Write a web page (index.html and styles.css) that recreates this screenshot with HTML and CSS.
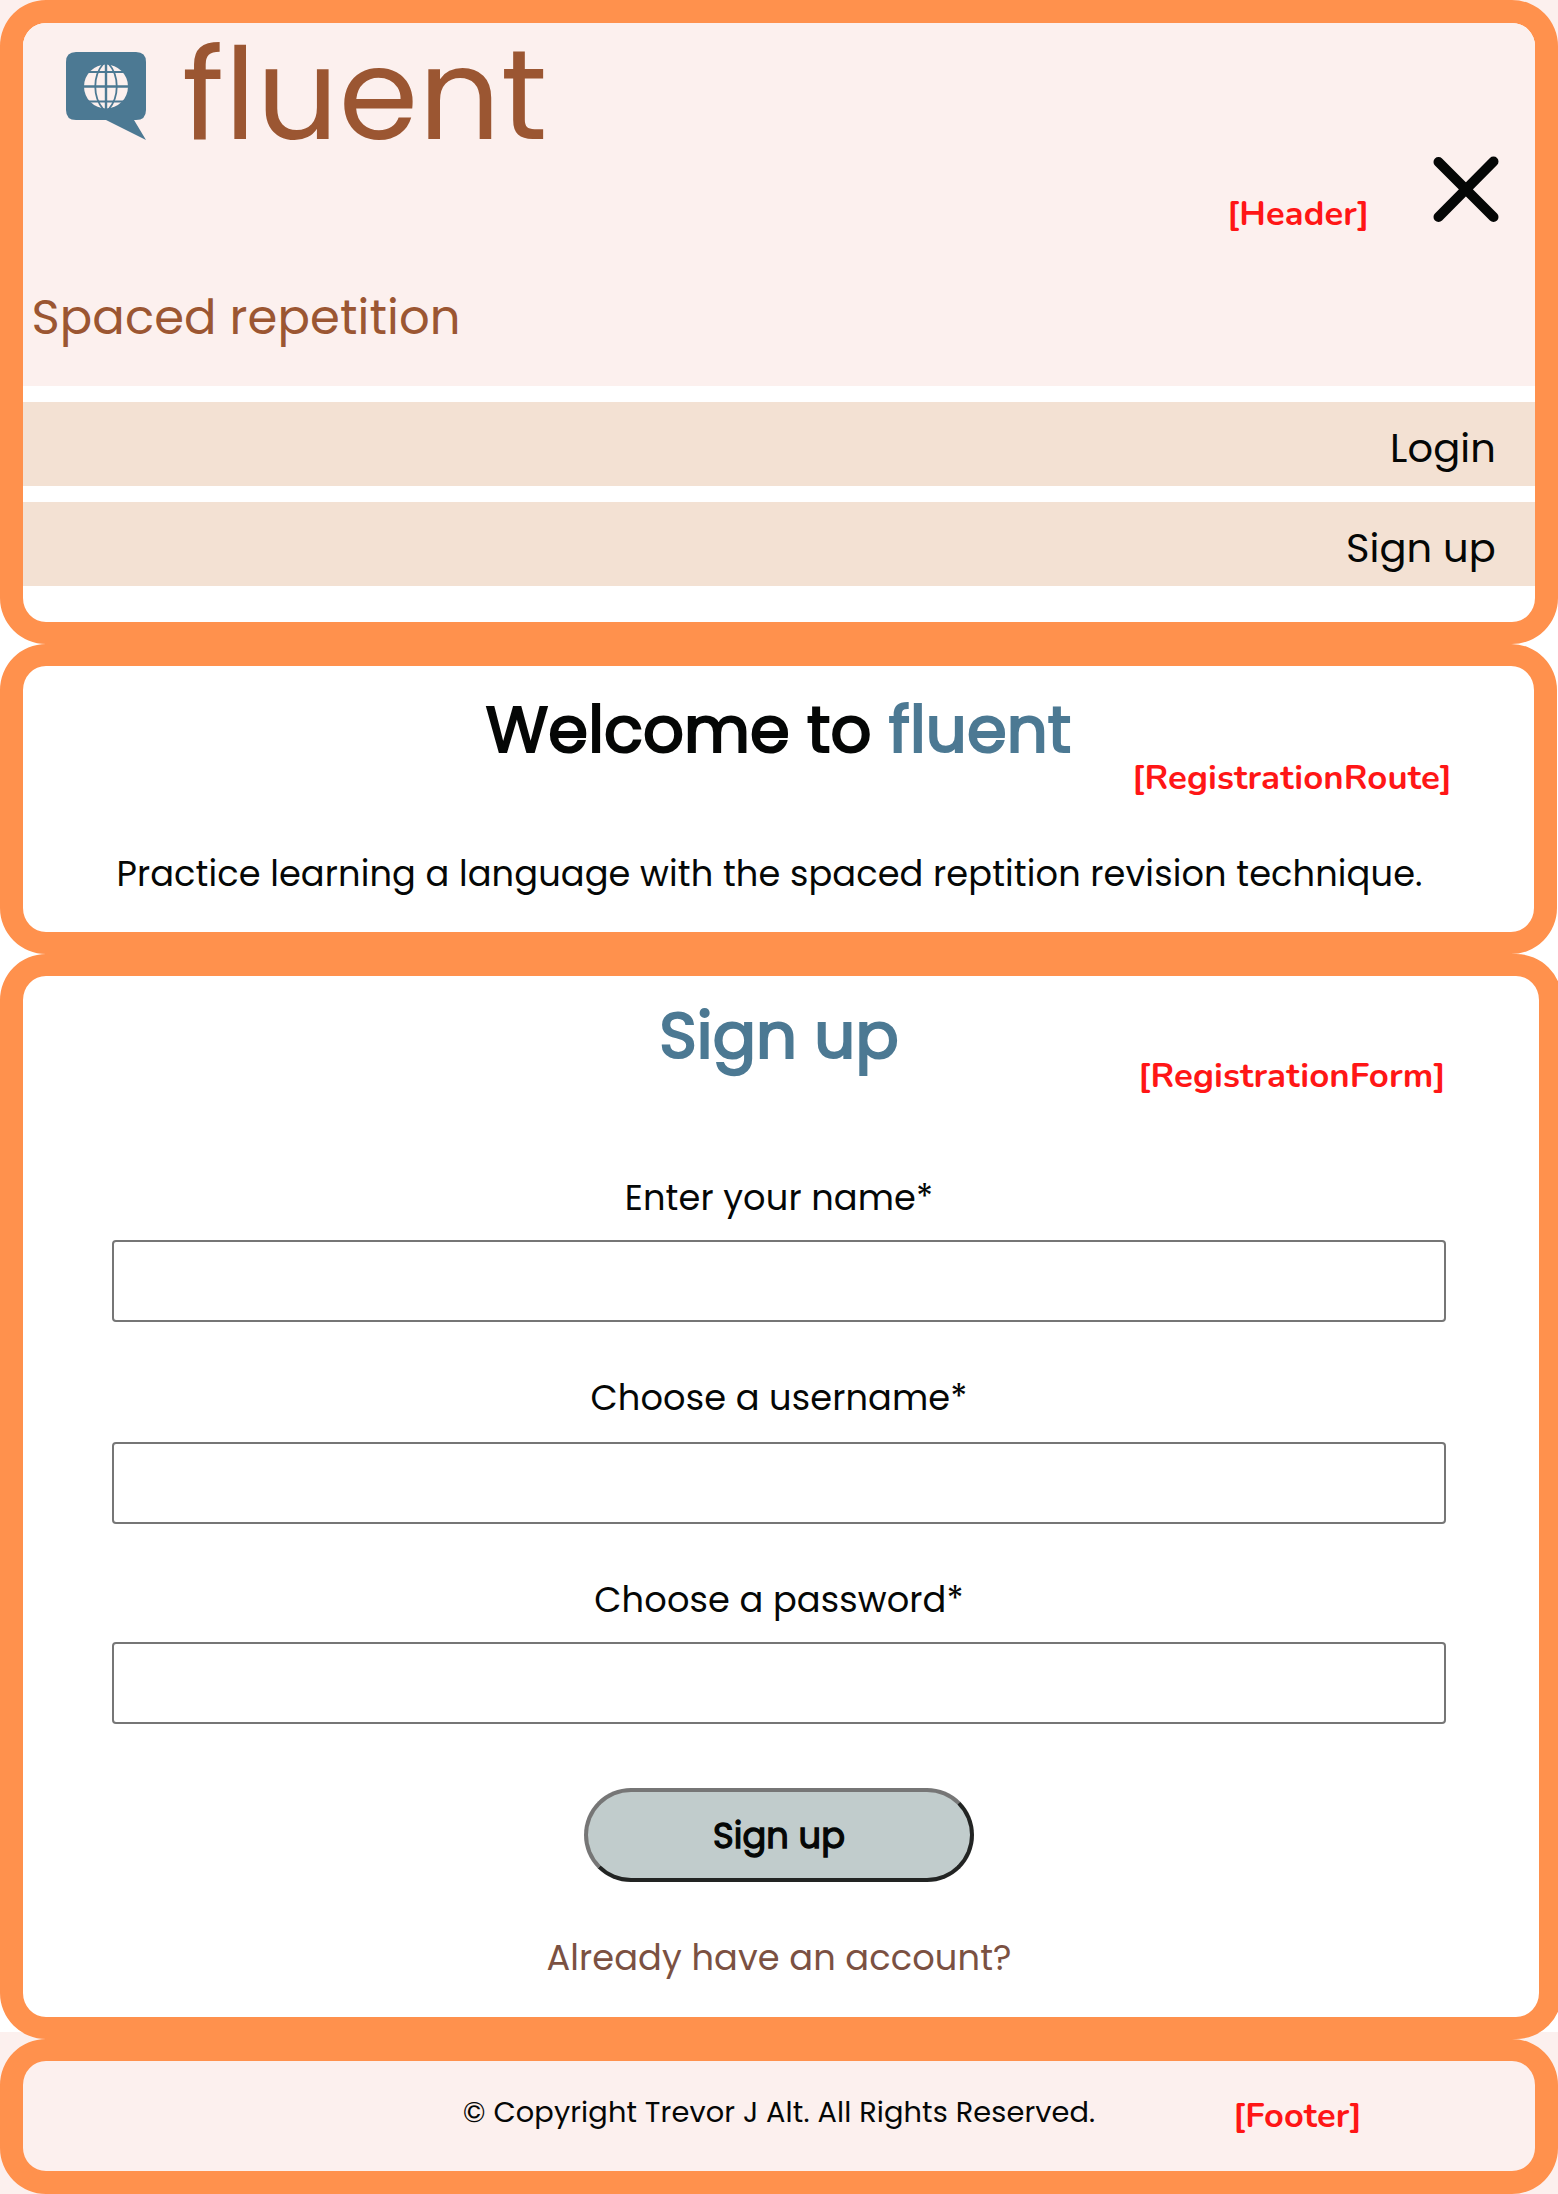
FILE: index.html
```html
<!DOCTYPE html>
<html lang="en">
<head>
<meta charset="utf-8">
<title>fluent</title>
<link rel="stylesheet" href="styles.css">
</head>
<body>
<header class="panel header">
  <div class="banner">
    <div class="branding">
      <div class="brand">
        <svg class="logo" viewBox="0 0 80 88">
          <path fill="#4c7993" d="M10 0H70Q80 0 80 10V58Q80 68 70 68H68L80 88L40 68H10Q0 68 0 58V10Q0 0 10 0Z"/>
          <circle cx="40" cy="34.500" r="22" fill="#fcf0ee"/>
          <g fill="none" stroke="#4c7993" stroke-width="1.800">
            <path stroke-width="2.400" d="M40 11V58M17 34.500H63"/>
            <path d="M20 20H60M20 49.500H60"/>
            <path d="M37.500 11.500C26.500 24 26.500 45 37.500 57.500M42.500 11.500C53.500 24 53.500 45 42.500 57.500"/>
          </g>
        </svg>
        <span class="brand-name">fluent</span>
      </div>
      <p class="tagline">Spaced repetition</p>
    </div>
    <svg class="close" viewBox="0 0 66 67"><path d="M5.500 6L60.500 61M60.500 5.500L5.500 61" stroke="#050706" stroke-width="10" stroke-linecap="round"/></svg>
  </div>
  <nav class="menu">
    <a class="menu-item">Login</a>
    <a class="menu-item">Sign up</a>
  </nav>
  <span class="tag tag-header">[Header]</span>
</header>
<section class="panel welcome">
  <h1 class="title">Welcome to <span class="accent">fluent</span></h1>
  <p class="intro">Practice learning a language with the spaced reptition revision technique.</p>
  <span class="tag tag-route">[RegistrationRoute]</span>
</section>
<section class="panel signup">
  <h2 class="title accent">Sign up</h2>
  <form class="form">
    <div class="field"><label class="label" for="name">Enter your name*</label><input class="input" id="name"></div>
    <div class="field field-username"><label class="label" for="username">Choose a username*</label><input class="input" id="username"></div>
    <div class="field"><label class="label" for="password">Choose a password*</label><input class="input" id="password" type="password"></div>
    <button class="submit" type="button">Sign up</button>
    <a class="account">Already have an account?</a>
  </form>
  <span class="tag tag-form">[RegistrationForm]</span>
</section>
<footer class="panel footer">
  <p class="copyright">© Copyright Trevor J Alt. All Rights Reserved.</p>
  <span class="tag tag-footer">[Footer]</span>
</footer>
</body>
</html>
```
FILE: styles.css
```css
* { box-sizing: border-box; margin: 0; padding: 0; }
html { overflow: hidden; }
body {
  width: 1558px;
  overflow: hidden;
  font-family: Poppins, Inter, sans-serif;
  font-size: 35.2px;
  line-height: 40px;
  letter-spacing: 0.12px;
  color: #050706;
  background: linear-gradient(#fcf0ee 0 386px, #fff 386px 2032px, #fcf0ee 2032px);
}
.panel {
  position: relative;
  border: solid #ff914d;
  border-width: 22px 23px;
  border-radius: 46px;
  background: #fff;
}
.header { height: 644px; border-top-width: 23px; }
.banner {
  display: flex;
  justify-content: space-between;
  height: 363px;
  padding: 8px 36px 0 0;
  border-radius: 23px 23px 0 0;
  background: #fcf0ee;
}
.brand { display: flex; gap: 36px; padding-left: 43px; }
.logo { width: 80px; height: 88px; margin-top: 21px; }
.brand-name { font-size: 128px; line-height: 128px; letter-spacing: 0.4px; color: #9b5632; }
.tagline { margin: 129px 0 0 8.5px; font-size: 48px; line-height: 60px; color: #9b5632; }
.close { width: 66px; height: 67px; margin-top: 125px; }
.menu { display: flex; flex-direction: column; gap: 16px; padding-top: 16px; }
.menu-item {
  height: 84px;
  padding: 4px 39px 0 0;
  background: #f3e1d3;
  font-size: 40px;
  line-height: 84px;
  text-align: right;
}

.welcome { width: 1557px; height: 310px; padding-top: 24px; text-align: center; }
.title { font-size: 64px; line-height: 80px; font-weight: 400; -webkit-text-stroke: 2.2px currentColor; }
.accent { color: #4c7993; }
.intro { margin-top: 84px; padding-right: 18px; }

.signup { width: 1562px; height: 1085px; padding: 20px 93px 0 89px; text-align: center; }
.form { display: flex; flex-direction: column; align-items: center; margin-top: 102px; }
.field { display: flex; flex-direction: column; gap: 22px; width: 100%; margin-bottom: 56px; }
.field-username { gap: 24px; }
.input { width: 100%; height: 82px; border: 2px solid #767676; border-radius: 4px; background: #fff; }
.submit {
  width: 390px;
  height: 94px;
  margin-top: 8px;
  padding-top: 2px;
  border: 4px solid;
  border-color: #767676 #222423 #222423 #767676;
  border-radius: 47px;
  background: #c1cccc;
  color: #050706;
  font: 400 35.2px/40px Poppins, Inter, sans-serif;
  letter-spacing: 0.12px;
  -webkit-text-stroke: 1.3px currentColor;
}
.account { margin-top: 56px; color: #7b5142; }

.footer { height: 155px; padding-top: 31px; border-bottom-width: 23px; background: #fcf0ee; text-align: center; }
.copyright { font-size: 28.8px; }

/* Component name annotations over the panels */
.tag {
  position: absolute;
  font: 700 34.8px/40px Nunito, Lato, sans-serif;
  color: #ff1616;
  white-space: nowrap;
}
.tag-header { top: 171px; left: 1204px; font-size: 34.4px; }
.tag-route { top: 92px; left: 1109px; }
.tag-form { top: 80px; left: 1115px; }
.tag-footer { top: 35px; left: 1210px; font-size: 34.4px; }
```
